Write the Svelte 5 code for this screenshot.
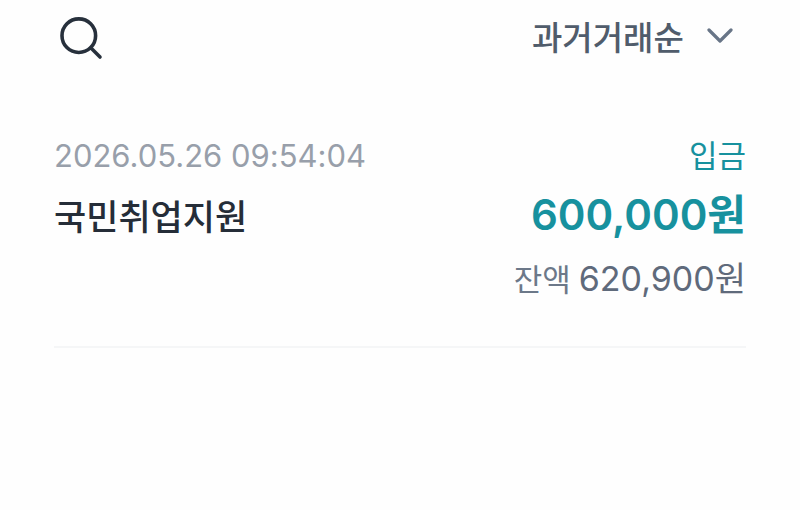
<script>
  let order = $state('oldest');
  const transactions = [
    { time: '2026.05.26 09:54:04', name: '국민취업지원', type: '입금', amount: '600,000', balance: '620,900' }
  ];
</script>

<main>
  <header>
    <button class="search" type="button" aria-label="검색">
      <svg width="48" height="48" viewBox="0 0 48 48" fill="none" stroke="#27303c" stroke-width="3.6" stroke-linecap="round">
        <circle cx="20.8" cy="21.7" r="16.8" />
        <path d="M33 34 L42 43" />
      </svg>
    </button>
    <label class="order">
      <select bind:value={order} aria-label="정렬">
        <option value="oldest">과거거래순</option>
        <option value="latest">최근거래순</option>
      </select>
      <svg width="28" height="20" viewBox="0 0 28 20" fill="none" stroke="#687587" stroke-width="3.2" stroke-linecap="round" stroke-linejoin="round">
        <path d="M3 2 L14 13 L25 2" />
      </svg>
    </label>
  </header>

  <ul>
    {#each transactions as t}
      <li>
        <div class="row meta"><time>{t.time}</time><span class="type">{t.type}</span></div>
        <div class="row main"><span class="name">{t.name}</span><strong>{t.amount}원</strong></div>
        <div class="row balance"><span class="label">잔액</span><span class="total">{t.balance}원</span></div>
      </li>
    {/each}
  </ul>
</main>

<style>
  :global(body) { background: #fefefe; }
  main {
    padding: 12px 54px 0;
    font-family: Inter, "Noto Sans CJK KR", sans-serif;
    font-feature-settings: "calt" 0;
    color: #252d38;
  }
  header { display: flex; justify-content: space-between; align-items: center; height: 52px; }
  button { padding: 0 0 0 4px; border: 0; background: none; display: flex; }
  .order { display: flex; align-items: center; gap: 22px; padding-right: 12px; }
  select {
    appearance: none;
    border: 0;
    padding: 0;
    background: none;
    font-family: inherit;
    font-size: 33px;
    font-weight: 500;
    line-height: 48px;
    color: #505c6b;
  }
  svg { display: block; }
  ul { list-style: none; margin: 68px 0 0; padding: 0; }
  li { border-bottom: 2px solid #f5f6f7; padding-bottom: 39px; }
  .row { display: flex; justify-content: space-between; align-items: baseline; }
  .meta { line-height: 48px; }
  time { font-size: 31px; color: #989faa; }
  .type { font-size: 31px; color: #17919e; }
  .main { line-height: 70px; }
  .name { font-size: 35px; font-weight: 500; }
  strong { font-size: 42px; font-weight: 600; color: #17919e; }
  .balance { justify-content: flex-end; gap: 8px; line-height: 54px; color: #5f6a7b; }
  .label { font-size: 31px; color: #6c7889; }
  .total { font-size: 34px; }
</style>
